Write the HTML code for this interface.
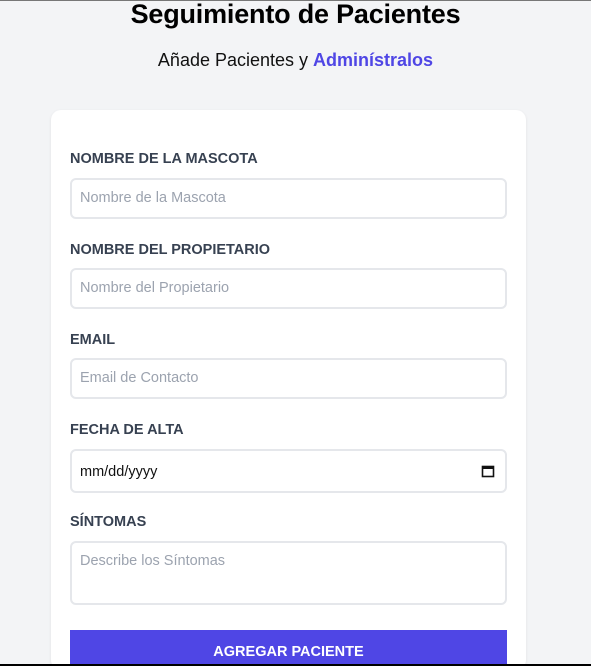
<!DOCTYPE html>
<html style="width:591px;height:666px;overflow:hidden"><head><meta charset="utf-8"><style>
*{box-sizing:border-box;margin:0;padding:0}
html,body{width:591px;height:666px;overflow:hidden}
body{background:#f3f4f6;font-family:"Liberation Sans",sans-serif;position:relative;border-top:1px solid #777}
h1{position:absolute;top:-2px;left:0;width:591px;text-align:center;font-size:27px;font-weight:900;color:#000;letter-spacing:-0.2px}
.sub{position:absolute;top:49px;left:0;width:591px;text-align:center;font-size:18px;color:#111}
.sub b{color:#4f46e5}
.card{position:absolute;left:51px;top:109px;width:475px;height:560px;background:#fff;border-radius:10px;box-shadow:0 1px 3px rgba(0,0,0,.08)}
.lbl{position:absolute;left:70px;font-size:14.5px;font-weight:bold;color:#374151}
.in{position:absolute;left:70px;width:437px;height:41px;border:2px solid #e5e7eb;border-radius:6px;background:#fff;font-size:14.5px;color:#9ca3af;padding:10px 8px}
.btn{position:absolute;left:70px;top:629px;width:437px;height:37px;background:#4f46e5;color:#fff;font-weight:bold;font-size:14.5px;text-align:center;padding-top:14px}
.bot{position:absolute;left:0;top:663px;width:591px;height:3px;background:#000}
</style></head><body>
<h1>Seguimiento de Pacientes</h1>
<div class="sub">Añade Pacientes y <b>Adminístralos</b></div>
<div class="card"></div>
<div class="lbl" style="top:150px">NOMBRE DE LA MASCOTA</div>
<div class="in" style="top:177px">Nombre de la Mascota</div>
<div class="lbl" style="top:241px">NOMBRE DEL PROPIETARIO</div>
<div class="in" style="top:267px">Nombre del Propietario</div>
<div class="lbl" style="top:331px">EMAIL</div>
<div class="in" style="top:357px">Email de Contacto</div>
<div class="lbl" style="top:421px">FECHA DE ALTA</div>
<div class="in" style="top:448px;height:44px;color:#111;padding-top:13px">mm/dd/yyyy
<svg style="position:absolute;right:10px;top:13px" width="14" height="14" viewBox="0 0 14 14"><rect x="1.5" y="2.5" width="11" height="10" fill="none" stroke="#111" stroke-width="1.6"/><rect x="1.5" y="2.5" width="11" height="2.5" fill="#111"/></svg></div>
<div class="lbl" style="top:513px">SÍNTOMAS</div>
<div class="in" style="top:540px;height:64px">Describe los Síntomas</div>
<div class="btn">AGREGAR PACIENTE</div>
<div class="bot"></div>
</body></html>
